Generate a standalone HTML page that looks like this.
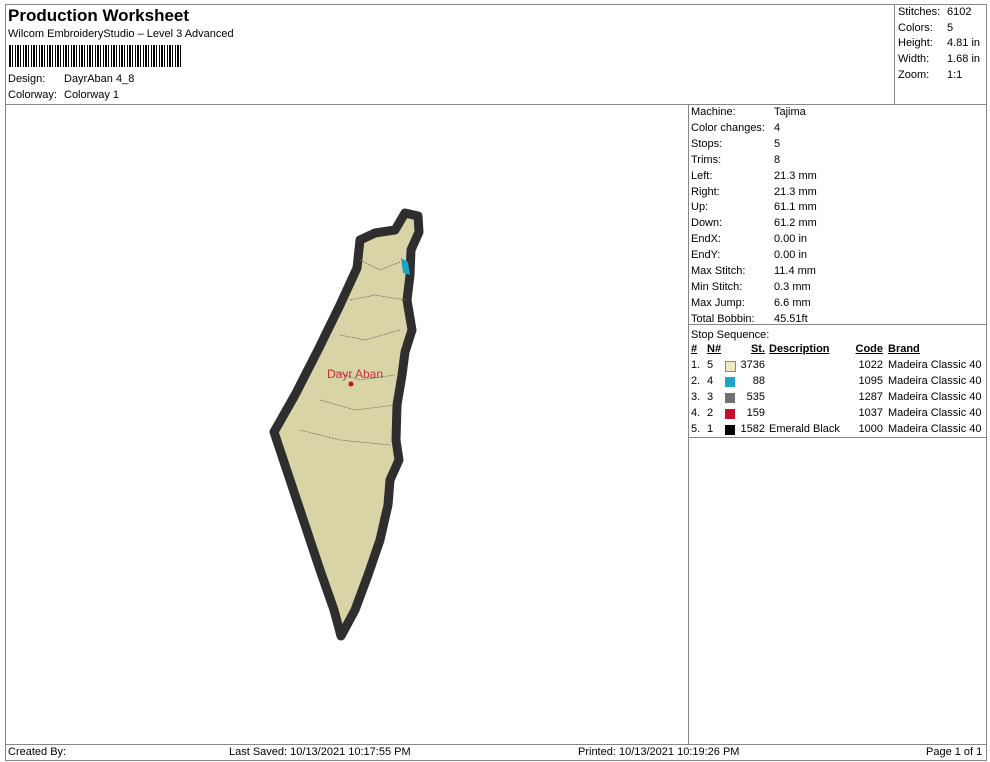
<!DOCTYPE html>
<html><head><style>
body{margin:0;background:#fff;font-family:"Liberation Sans",sans-serif;font-size:11px;color:#000;}
.a{position:absolute;white-space:nowrap}
.b{position:absolute;border:1px solid #888;box-sizing:border-box}
table{border-collapse:collapse;font-size:11px}
td{padding:0;height:16px}
</style></head><body>
<div style="position:relative;width:990px;height:762px;overflow:hidden">
<div class="b" style="left:5px;top:4px;width:982px;height:757px"></div>
<div class="b" style="left:5px;top:4px;width:982px;height:101px"></div>
<div class="b" style="left:894px;top:4px;width:93px;height:101px"></div>
<div class="b" style="left:688px;top:104px;width:299px;height:641px"></div>
<div class="b" style="left:688px;top:324px;width:299px;height:114px"></div>
<div class="b" style="left:5px;top:744px;width:982px;height:17px"></div>
<div class="a" style="left:8px;top:6px;font-size:17px;font-weight:bold">Production Worksheet</div>
<div class="a" style="left:8px;top:28px">Wilcom EmbroideryStudio – Level 3 Advanced</div>
<div class="a" style="left:9px;top:45px;width:174px;height:22px;background:repeating-linear-gradient(90deg,#000 0 2px,#fff 2px 3px,#000 3px 4px,#fff 4px 6px,#000 6px 7px,#fff 7px 8px)"></div>
<div class="a" style="left:8px;top:73px">Design:</div><div class="a" style="left:64px;top:73px">DayrAban 4_8</div>
<div class="a" style="left:8px;top:89px">Colorway:</div><div class="a" style="left:64px;top:89px">Colorway 1</div>
<div class="a" style="left:898px;top:5px;line-height:15.7px">Stitches:<br>Colors:<br>Height:<br>Width:<br>Zoom:</div>
<div class="a" style="left:947px;top:5px;line-height:15.7px">6102<br>5<br>4.81 in<br>1.68 in<br>1:1</div>
<div class="a" style="left:691px;top:105px;line-height:15.9px">Machine:<br>Color changes:<br>Stops:<br>Trims:<br>Left:<br>Right:<br>Up:<br>Down:<br>EndX:<br>EndY:<br>Max Stitch:<br>Min Stitch:<br>Max Jump:<br>Total Bobbin:<br>Stop Sequence:</div>
<div class="a" style="left:774px;top:105px;line-height:15.9px">Tajima<br>4<br>5<br>8<br>21.3 mm<br>21.3 mm<br>61.1 mm<br>61.2 mm<br>0.00 in<br>0.00 in<br>11.4 mm<br>0.3 mm<br>6.6 mm<br>45.51ft</div>
<table class="a" style="left:691px;top:341px">
<tr style="font-weight:bold;text-decoration:underline"><td style="width:16px">#</td><td style="width:18px">N#</td><td style="width:40px;text-align:right">St.</td><td style="width:80px;padding-left:4px">Description</td><td style="width:34px;text-align:right">Code</td><td style="padding-left:5px">Brand</td></tr>
<tr><td>1.</td><td>5</td><td style="text-align:right"><span style="display:inline-block;width:9px;height:9px;background:#efe9c4;border:1px solid #888;float:left;margin:2px 0 0 0"></span>3736</td><td></td><td style="text-align:right">1022</td><td style="padding-left:5px">Madeira Classic 40</td></tr>
<tr><td>2.</td><td>4</td><td style="text-align:right"><span style="display:inline-block;width:10px;height:10px;background:#1ba5c4;float:left;margin-top:2px"></span>88</td><td></td><td style="text-align:right">1095</td><td style="padding-left:5px">Madeira Classic 40</td></tr>
<tr><td>3.</td><td>3</td><td style="text-align:right"><span style="display:inline-block;width:10px;height:10px;background:#707070;float:left;margin-top:2px"></span>535</td><td></td><td style="text-align:right">1287</td><td style="padding-left:5px">Madeira Classic 40</td></tr>
<tr><td>4.</td><td>2</td><td style="text-align:right"><span style="display:inline-block;width:10px;height:10px;background:#c8102e;float:left;margin-top:2px"></span>159</td><td></td><td style="text-align:right">1037</td><td style="padding-left:5px">Madeira Classic 40</td></tr>
<tr><td>5.</td><td>1</td><td style="text-align:right"><span style="display:inline-block;width:10px;height:10px;background:#000;float:left;margin-top:2px"></span>1582</td><td style="padding-left:4px">Emerald Black</td><td style="text-align:right">1000</td><td style="padding-left:5px">Madeira Classic 40</td></tr>
</table>
<svg class="a" style="left:0;top:0" width="990" height="762">
<path d="M405,213 L418,216 L419,232 L411,250 L410,275 L407,300 L412,330 L405,352 L402,375 L397,405 L396,440 L399,460 L390,480 L388,505 L380,540 L368,575 L355,610 L341,636 L334,610 L320,570 L305,525 L290,480 L274,432 L295,395 L318,350 L340,305 L357,268 L360,240 L375,233 L395,230 Z" fill="#d9d4a6" stroke="#2e2e2e" stroke-width="9" stroke-linejoin="round"/>
<path d="M360,260 L380,270 L400,262 M350,300 L375,295 L405,300 M340,335 L365,340 L400,330 M330,370 L360,380 L395,375 M320,400 L355,410 L395,405 M300,430 L340,440 L390,445" fill="none" stroke="#666" stroke-width="0.7" stroke-dasharray="2,1"/>
<path d="M401,258 L408,262 L410,275 L403,273 Z" fill="#1ba5c4"/>
<text x="327" y="378" font-family="Liberation Sans" font-size="12" fill="#c8303a">Dayr Aban</text>
<circle cx="351" cy="384" r="2.5" fill="#c8102e"/>
</svg>
<div class="a" style="left:8px;top:746px">Created By:</div>
<div class="a" style="left:229px;top:746px">Last Saved: 10/13/2021 10:17:55 PM</div>
<div class="a" style="left:578px;top:746px">Printed: 10/13/2021 10:19:26 PM</div>
<div class="a" style="left:926px;top:746px">Page 1 of 1</div>
</div>
</body></html>
